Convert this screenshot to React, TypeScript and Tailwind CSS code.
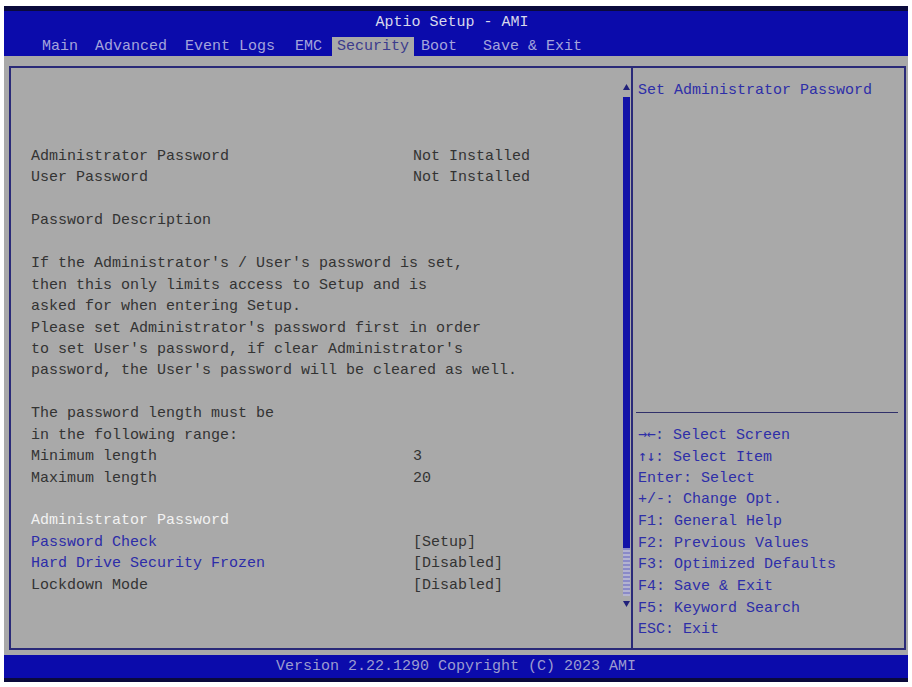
import React from "react";

const leftRows: { label?: string; value?: string; kind?: "text" | "blue" | "white" }[] = [
  { label: "Administrator Password", value: "Not Installed" },
  { label: "User Password", value: "Not Installed" },
  {},
  { label: "Password Description" },
  {},
  { label: "If the Administrator's / User's password is set," },
  { label: "then this only limits access to Setup and is" },
  { label: "asked for when entering Setup." },
  { label: "Please set Administrator's password first in order" },
  { label: "to set User's password, if clear Administrator's" },
  { label: "password, the User's password will be cleared as well." },
  {},
  { label: "The password length must be" },
  { label: "in the following range:" },
  { label: "Minimum length", value: "3" },
  { label: "Maximum length", value: "20" },
  {},
  { label: "Administrator Password", kind: "white" },
  { label: "Password Check", value: "[Setup]", kind: "blue" },
  { label: "Hard Drive Security Frozen", value: "[Disabled]", kind: "blue" },
  { label: "Lockdown Mode", value: "[Disabled]" },
];

const helpLines: [string, string][] = [
  ["\u2192\u2190", ": Select Screen"],
  ["\u2191\u2193", ": Select Item"],
  ["", "Enter: Select"],
  ["", "+/-: Change Opt."],
  ["", "F1: General Help"],
  ["", "F2: Previous Values"],
  ["", "F3: Optimized Defaults"],
  ["", "F4: Save & Exit"],
  ["", "F5: Keyword Search"],
  ["", "ESC: Exit"],
];

export default function App() {
  return (
    <div className="w-[912px] h-[687px] bg-white pt-[6px] px-[4px] font-['Liberation_Mono','DejaVu_Sans_Mono',monospace] text-[15px] overflow-hidden">
      <div className="w-[904px] h-[676px] flex flex-col bg-[#a9a9a9]">
        {/* Header */}
        <div className="h-[5px] bg-[#0a0a3c]" />
        <div className="h-[45px] bg-[#0b0bab] flex flex-col">
          <div className="h-[22px] leading-[22px] text-center pr-[8px] pt-[1px] text-[#d8d8ec] whitespace-pre">Aptio Setup - AMI</div>
          <div className="mt-[4px] h-[19px] flex text-[#a4a4dc] leading-[19px] whitespace-pre">
            <span className="ml-[33px] px-[5px]">Main</span>
            <span className="ml-[7px] px-[5px]">Advanced</span>
            <span className="ml-[8px] px-[5px]">Event Logs</span>
            <span className="ml-[10px] px-[5px]">EMC</span>
            <span className="ml-[5px] px-[5px] bg-[#a9a9a9] text-[#3c3c8c]">Security</span>
            <span className="ml-[2px] px-[5px]">Boot</span>
            <span className="ml-[16px] px-[5px]">Save &amp; Exit</span>
          </div>
        </div>

        {/* Frame */}
        <div className="mt-[10px] ml-[5px] w-[897px] h-[584px] border-2 border-[#2a2a78] flex">
          {/* Left panel */}
          <div className="w-[608px] pl-[20px] pt-[78px] leading-[21.45px] whitespace-pre">
            {leftRows.map((r, i) => {
              const color =
                r.kind === "blue" ? "text-[#2c2ca8]" : r.kind === "white" ? "text-[#f2f2f2]" : "text-[#333333]";
              return (
                <div key={i} className="flex h-[21.45px]">
                  <span className={`w-[382px] ${color}`}>{r.label ?? ""}</span>
                  <span className="text-[#333333]">{r.value ?? ""}</span>
                </div>
              );
            })}
          </div>

          {/* Scrollbar */}
          <div className="w-[12px] flex flex-col items-center pl-[2px]">
            <svg className="mt-[16px]" width="7" height="6" viewBox="0 0 7 6">
              <path d="M3.5 0 L7 6 L0 6 Z" fill="#20207a" />
            </svg>
            <div className="mt-[7px] w-[7px] h-[451px] bg-[#1313a8]" />
            <div className="w-[7px] h-[48px] bg-[repeating-linear-gradient(to_bottom,#8a8ac8_0px,#8a8ac8_2px,#b4b4d0_2px,#b4b4d0_4px)]" />
            <svg className="mt-[5px]" width="7" height="6" viewBox="0 0 7 6">
              <path d="M0 0 L7 0 L3.5 6 Z" fill="#20207a" />
            </svg>
          </div>

          {/* Right panel */}
          <div className="w-[271px] border-l-2 border-[#2a2a78] flex flex-col justify-between pl-[5px] text-[#2e2ea8] whitespace-pre">
            <div className="pt-[12px] leading-[21.67px]">Set Administrator Password</div>
            <div className="pb-[7px]">
              <div className="h-[1px] bg-[#30306a] mr-[4px] -ml-[2px]" />
              <div className="mt-[11px] leading-[21.67px]">
                {helpLines.map(([a, l], i) => (
                  <div key={i} className="h-[21.67px]">
                    {a && <span className="font-['DejaVu_Sans_Mono',monospace] tracking-[-0.5px]">{a}</span>}
                    {l}
                  </div>
                ))}
              </div>
            </div>
          </div>
        </div>

        {/* Footer */}
        <div className="mt-[5px] h-[23px] bg-[#0b0bab] text-center leading-[23px] text-[#9c9cd0] whitespace-pre">
          Version 2.22.1290 Copyright (C) 2023 AMI
        </div>
        <div className="h-[4px] bg-[#0a0a3c]" />
      </div>
    </div>
  );
}
